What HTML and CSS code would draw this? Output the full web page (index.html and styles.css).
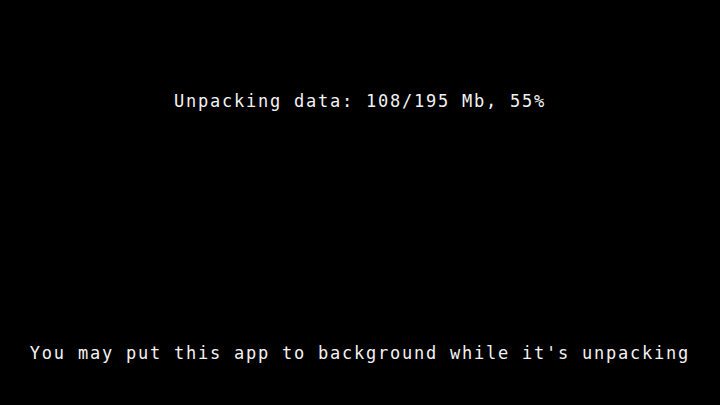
FILE: index.html
```html
<!DOCTYPE html>
<html>
<head>
<meta charset="utf-8">
<link rel="stylesheet" href="styles.css">
</head>
<body>
<main class="screen">
  <p class="status">Unpacking data: 108/195 Mb, 55%</p>
  <p class="hint">You may put this app to background while it's unpacking</p>
</main>
</body>
</html>
```
FILE: styles.css
```css
html, body {
  margin: 0;
  padding: 0;
  background: #000;
}
.screen {
  width: 720px;
  height: 405px;
  box-sizing: border-box;
  padding: 91px 0 42px;
  display: flex;
  flex-direction: column;
  align-items: center;
  background: #000;
  color: #f2f2f2;
  font-family: "DejaVu Sans Mono", "Liberation Mono", monospace;
  font-size: 17px;
  line-height: 20px;
  letter-spacing: 1.77px;
}
.status, .hint {
  margin: 0;
  white-space: pre;
}
.hint {
  margin-top: auto;
}
```
